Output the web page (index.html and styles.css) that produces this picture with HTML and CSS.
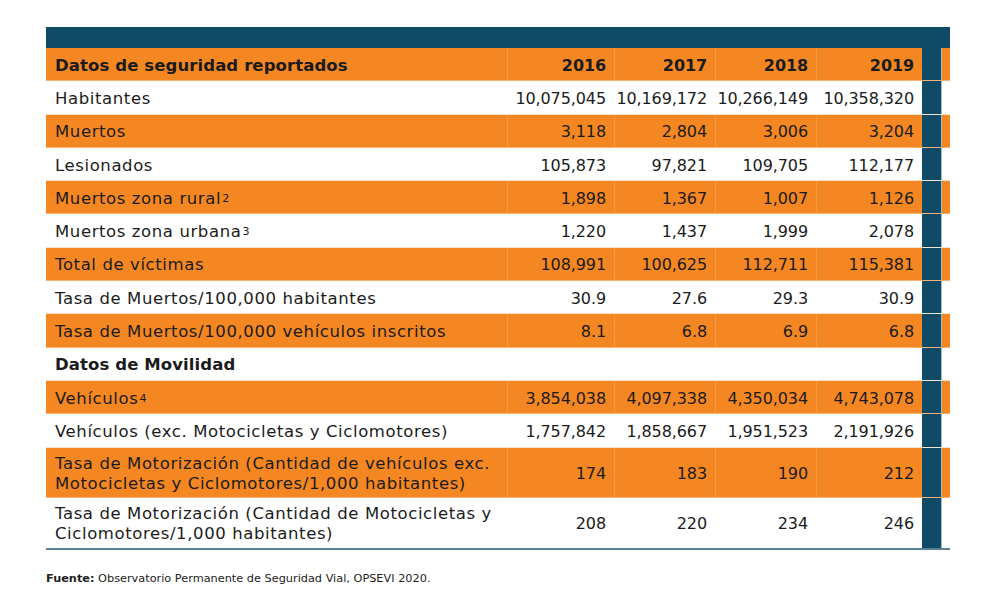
FILE: index.html
```html
<!DOCTYPE html>
<html lang="es">
<head>
<meta charset="utf-8">
<link rel="stylesheet" href="styles.css">
<title>Datos de seguridad</title>
</head>
<body>
<div class="page">
  <div class="table">
    <div class="topbar"></div>
    <div class="row orange head">
      <div class="c label">Datos de seguridad reportados</div>
      <div class="c n">2016</div><div class="c n">2017</div><div class="c n">2018</div><div class="c n">2019</div>
      <div class="bar"></div><div class="tail"></div>
    </div>
    <div class="row">
      <div class="c label">Habitantes</div>
      <div class="c n">10,075,045</div><div class="c n">10,169,172</div><div class="c n">10,266,149</div><div class="c n">10,358,320</div>
      <div class="bar"></div><div class="tail"></div>
    </div>
    <div class="row orange">
      <div class="c label">Muertos</div>
      <div class="c n">3,118</div><div class="c n">2,804</div><div class="c n">3,006</div><div class="c n">3,204</div>
      <div class="bar"></div><div class="tail"></div>
    </div>
    <div class="row">
      <div class="c label">Lesionados</div>
      <div class="c n">105,873</div><div class="c n">97,821</div><div class="c n">109,705</div><div class="c n">112,177</div>
      <div class="bar"></div><div class="tail"></div>
    </div>
    <div class="row orange">
      <div class="c label">Muertos zona rural<sup>2</sup></div>
      <div class="c n">1,898</div><div class="c n">1,367</div><div class="c n">1,007</div><div class="c n">1,126</div>
      <div class="bar"></div><div class="tail"></div>
    </div>
    <div class="row">
      <div class="c label">Muertos zona urbana<sup>3</sup></div>
      <div class="c n">1,220</div><div class="c n">1,437</div><div class="c n">1,999</div><div class="c n">2,078</div>
      <div class="bar"></div><div class="tail"></div>
    </div>
    <div class="row orange">
      <div class="c label">Total de víctimas</div>
      <div class="c n">108,991</div><div class="c n">100,625</div><div class="c n">112,711</div><div class="c n">115,381</div>
      <div class="bar"></div><div class="tail"></div>
    </div>
    <div class="row">
      <div class="c label">Tasa de Muertos/100,000 habitantes</div>
      <div class="c n">30.9</div><div class="c n">27.6</div><div class="c n">29.3</div><div class="c n">30.9</div>
      <div class="bar"></div><div class="tail"></div>
    </div>
    <div class="row orange">
      <div class="c label">Tasa de Muertos/100,000 vehículos inscritos</div>
      <div class="c n">8.1</div><div class="c n">6.8</div><div class="c n">6.9</div><div class="c n">6.8</div>
      <div class="bar"></div><div class="tail"></div>
    </div>
    <div class="row head">
      <div class="c label">Datos de Movilidad</div>
      <div class="c n"></div><div class="c n"></div><div class="c n"></div><div class="c n"></div>
      <div class="bar"></div><div class="tail"></div>
    </div>
    <div class="row orange">
      <div class="c label">Vehículos<sup>4</sup></div>
      <div class="c n">3,854,038</div><div class="c n">4,097,338</div><div class="c n">4,350,034</div><div class="c n">4,743,078</div>
      <div class="bar"></div><div class="tail"></div>
    </div>
    <div class="row">
      <div class="c label">Vehículos (exc. Motocicletas y Ciclomotores)</div>
      <div class="c n">1,757,842</div><div class="c n">1,858,667</div><div class="c n">1,951,523</div><div class="c n">2,191,926</div>
      <div class="bar"></div><div class="tail"></div>
    </div>
    <div class="row orange tall">
      <div class="c label">Tasa de Motorización (Cantidad de vehículos exc.<br>Motocicletas y Ciclomotores/1,000 habitantes)</div>
      <div class="c n">174</div><div class="c n">183</div><div class="c n">190</div><div class="c n">212</div>
      <div class="bar"></div><div class="tail"></div>
    </div>
    <div class="row tall last">
      <div class="c label">Tasa de Motorización (Cantidad de Motocicletas y<br>Ciclomotores/1,000 habitantes)</div>
      <div class="c n">208</div><div class="c n">220</div><div class="c n">234</div><div class="c n">246</div>
      <div class="bar"></div><div class="tail"></div>
    </div>
  </div>
  <p class="source"><b>Fuente:</b> Observatorio Permanente de Seguridad Vial, OPSEVI 2020.</p>
</div>
</body>
</html>
```
FILE: styles.css
```css
html, body {
  margin: 0;
  padding: 0;
  background: #ffffff;
}
body {
  font-family: "DejaVu Sans", "Open Sans", sans-serif;
  color: #1b1b1b;
}
.page {
  padding: 27px 0 0 46px;
}
.table {
  width: 904px;
  border-bottom: 2px solid #5d7f96;
}
.topbar {
  height: 21px;
  background: #0f4b67;
}
.row {
  display: grid;
  grid-template-columns: 461px 107px 101px 101px 106px 20px 8px;
  height: 33.3px;
  background: #ffffff;
  border-bottom: 1px solid #f3e3d2;
  box-sizing: border-box;
}
.row.tall {
  height: 50px;
}
.row.last {
  border-bottom: none;
}
.row.orange {
  background: #f48722;
  border-bottom-color: #f7b273;
}
.c {
  display: flex;
  align-items: center;
  padding-top: 3px;
  font-size: 16px;
  line-height: 20px;
  letter-spacing: -0.1px;
}
.label {
  padding-left: 9px;
  font-size: 16.5px;
  letter-spacing: 0.6px;
}
.n {
  justify-content: flex-end;
  padding-right: 8px;
}
.orange .n {
  border-left: 1px solid #f59a45;
}
.orange .n:first-of-type {
  border-left: none;
}
.head .c {
  font-weight: bold;
}
.head .label {
  letter-spacing: 0.1px;
}
.bar {
  background: #0f4b67;
  border-right: 1px solid #9fbccc;
}
sup {
  font-size: 11px;
  line-height: 0;
  vertical-align: 7px;
  margin-left: 1px;
  letter-spacing: 0;
}
.source {
  margin: 22px 0 0 0;
  font-size: 11.3px;
  color: #222;
}
.source b {
  font-weight: bold;
}
```
